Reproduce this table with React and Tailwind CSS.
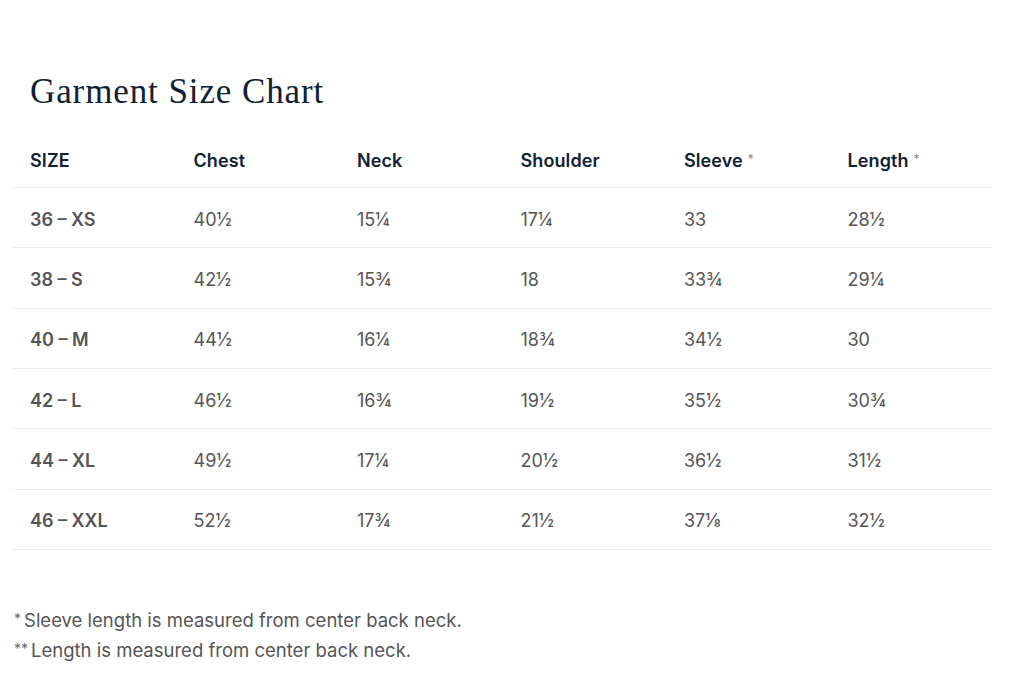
import React from "react";

const rows = [
  ["36 – XS", "40½", "15¼", "17¼", "33", "28½"],
  ["38 – S", "42½", "15¾", "18", "33¾", "29¼"],
  ["40 – M", "44½", "16¼", "18¾", "34½", "30"],
  ["42 – L", "46½", "16¾", "19½", "35½", "30¾"],
  ["44 – XL", "49½", "17¼", "20½", "36½", "31½"],
  ["46 – XXL", "52½", "17¾", "21½", "37⅛", "32½"],
];

const headers = [
  { label: "SIZE" },
  { label: "Chest" },
  { label: "Neck" },
  { label: "Shoulder" },
  { label: "Sleeve", star: true },
  { label: "Length", star: true },
];

export default function App() {
  return (
    <div className="w-[1024px] h-[687px] bg-white overflow-hidden" style={{ fontFamily: "Inter, 'Liberation Sans', sans-serif" }}>
      <div className="pt-[70px] pl-[12px] pr-[31px]">
        <h1
          className="pl-[18px] text-[35px] leading-[44px] tracking-[0.9px] text-[#0f2133]"
          style={{ fontFamily: "'Liberation Serif', 'DejaVu Serif', serif" }}
        >
          Garment Size Chart
        </h1>
        <div className="mt-[20px]">
          <div className="grid grid-cols-6 h-[54px] items-center border-b border-[#ececec]">
            {headers.map((h) => (
              <div key={h.label} className="pl-[18px] text-[18px] font-semibold text-[#0f2133] tracking-[0.1px]">
                {h.label}
                {h.star && <span className="ml-[5px] align-[4px] text-[12px] font-normal text-[#8a8a8a]">*</span>}
              </div>
            ))}
          </div>
          {rows.map((r) => (
            <div key={r[0]} className="grid grid-cols-6 h-[60.33px] items-center border-b border-[#ececec]">
              {r.map((c, i) => (
                <div
                  key={i}
                  className={
                    "pl-[18px] pt-[3px] text-[18px] text-[#555555] " + (i === 0 ? "font-semibold" : "font-normal")
                  }
                >
                  {c}
                </div>
              ))}
            </div>
          ))}
        </div>
      </div>
      <div className="mt-[55px] pl-[14px] text-[18.5px] leading-[30px] text-[#555555]">
        <p className="h-[30px]">
          <span className="text-[14px] leading-[0] align-[3px] text-[#666666]">*</span>
          <span className="ml-[3px]">Sleeve length is measured from center back neck.</span>
        </p>
        <p className="h-[30px]">
          <span className="text-[14px] leading-[0] align-[3px] text-[#666666]">**</span>
          <span className="ml-[3px]">Length is measured from center back neck.</span>
        </p>
      </div>
    </div>
  );
}
